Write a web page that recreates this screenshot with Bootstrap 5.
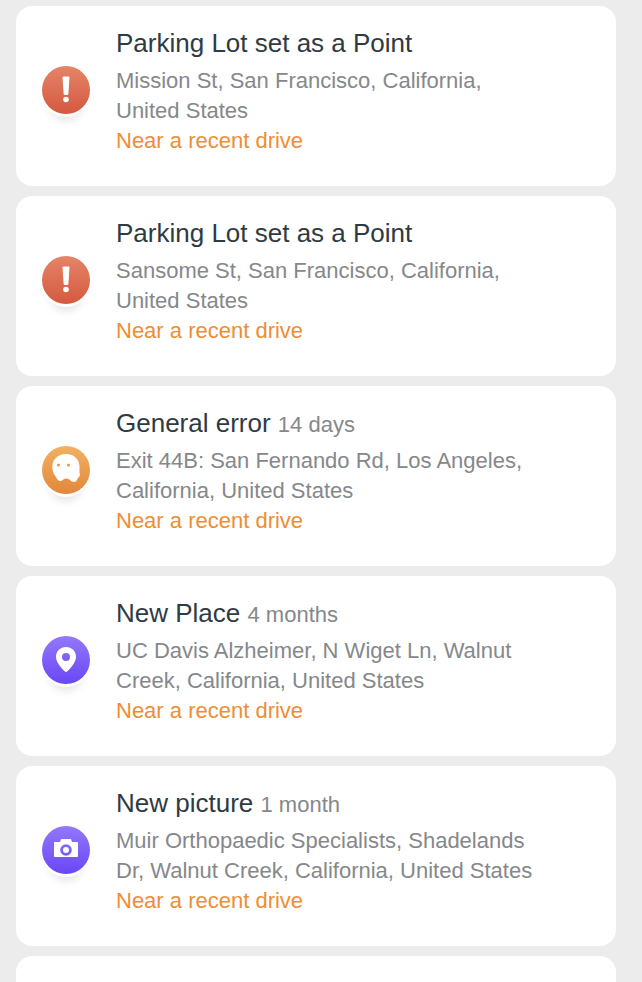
<!DOCTYPE html>
<html lang="en">
<head>
    <meta charset="UTF-8">
    <meta name="viewport" content="width=device-width, initial-scale=1.0">
    <title>Activity</title>
    <link href="https://cdn.jsdelivr.net/npm/bootstrap@5.3.0/dist/css/bootstrap.min.css" rel="stylesheet">
    <style>
        html, body {
            overflow: hidden;
            background-color: #ececec;
        }
        body {
            font-family: "Liberation Sans", Arial, sans-serif;
        }
        .feed {
            gap: 10px;
            padding: 6px 26px 0 16px;
        }
        .feed-item {
            height: 180px;
            border-radius: 16px;
            background-color: #fff;
            padding: 20px 80px 0 26px;
        }
        .feed-icon {
            flex: 0 0 48px;
            width: 48px;
            height: 48px;
            margin-top: 40px;
            margin-right: 26px;
            border-radius: 50%;
            box-shadow: 0 3px 0 #fff, 0 14px 8px -7px rgba(0, 0, 0, .1);
        }
        .feed-icon svg {
            display: block;
            width: 48px;
            height: 48px;
        }
        .icon-red { background: linear-gradient(#e58468, #d4593f); }
        .icon-orange { background: linear-gradient(#f2b162, #e2873a); }
        .icon-purple { background: linear-gradient(#9478fb, #6a47f5); }
        .feed-title {
            margin: 0 0 6px;
            font-size: 26px;
            font-weight: 400;
            line-height: 34px;
            color: #2f3a43;
        }
        .feed-age {
            font-size: 22px;
            line-height: 1;
            color: #85888b;
        }
        .feed-address {
            margin: 0;
            font-size: 22px;
            line-height: 30px;
            color: #85888b;
        }
        .feed-note {
            font-size: 22px;
            line-height: 30px;
            color: #ed8e34;
        }
    </style>
</head>
<body>
    <div class="feed d-flex flex-column">
        <div class="feed-item d-flex align-items-start">
            <div class="feed-icon icon-red">
                <svg viewBox="0 0 48 48"><path d="M21 11h6l-1.200 17.500h-3.600z" fill="#fff" stroke="#fff" stroke-linejoin="round"/><circle cx="24" cy="33.500" r="2.800" fill="#fff"/></svg>
            </div>
            <div>
                <h5 class="feed-title">Parking Lot set as a Point</h5>
                <p class="feed-address">Mission St, San Francisco, California, United States</p>
                <div class="feed-note">Near a recent drive</div>
            </div>
        </div>
        <div class="feed-item d-flex align-items-start">
            <div class="feed-icon icon-red">
                <svg viewBox="0 0 48 48"><path d="M21 11h6l-1.200 17.500h-3.600z" fill="#fff" stroke="#fff" stroke-linejoin="round"/><circle cx="24" cy="33.500" r="2.800" fill="#fff"/></svg>
            </div>
            <div>
                <h5 class="feed-title">Parking Lot set as a Point</h5>
                <p class="feed-address">Sansome St, San Francisco, California, United States</p>
                <div class="feed-note">Near a recent drive</div>
            </div>
        </div>
        <div class="feed-item d-flex align-items-start">
            <div class="feed-icon icon-orange">
                <svg viewBox="0 0 48 48"><path d="M24.300 8C16 8 10.300 13.500 10.300 20.500 10.300 25 11.500 28 14 31c1 2 2 4 4.500 4 2 0 2.500-2.500 6-2.500 3 0 4.500 3.500 8 3.500 2 0 2.500-2.500 3.500-4 1-1 2-2 1.800-3.500-.5-2.500-.3-5.500-.3-8C37.500 13.500 32 8 24.300 8z" fill="#fff"/><circle cx="16.500" cy="19" r="1.500" fill="#e9994a"/><circle cx="26.500" cy="19" r="1.500" fill="#e9994a"/></svg>
            </div>
            <div>
                <h5 class="feed-title">General error <span class="feed-age">14 days</span></h5>
                <p class="feed-address">Exit 44B: San Fernando Rd, Los Angeles, California, United States</p>
                <div class="feed-note">Near a recent drive</div>
            </div>
        </div>
        <div class="feed-item d-flex align-items-start">
            <div class="feed-icon icon-purple">
                <svg viewBox="0 0 48 48"><path fill-rule="evenodd" d="M24 11c-5.800 0-10 4.300-10 9.800 0 5.700 5.500 11.300 8.600 14.500.8.800 2 .8 2.800 0 3.100-3.200 8.600-8.800 8.600-14.500C34 15.300 29.800 11 24 11zm0 6a4 4 0 1 1 0 8 4 4 0 0 1 0-8z" fill="#fff"/></svg>
            </div>
            <div>
                <h5 class="feed-title">New Place <span class="feed-age">4 months</span></h5>
                <p class="feed-address">UC Davis Alzheimer, N Wiget Ln, Walnut Creek, California, United States</p>
                <div class="feed-note">Near a recent drive</div>
            </div>
        </div>
        <div class="feed-item d-flex align-items-start">
            <div class="feed-icon icon-purple">
                <svg viewBox="0 0 48 48"><path fill-rule="evenodd" d="M13 16h5l1-3h10l1 3h5c.6 0 1 .4 1 1v13c0 .6-.4 1-1 1H13c-.6 0-1-.4-1-1V17c0-.6.4-1 1-1zm11 2.200a5.800 5.800 0 1 0 0 11.600 5.800 5.800 0 0 0 0-11.600zm0 2.800a3 3 0 1 1 0 6 3 3 0 0 1 0-6z" fill="#fff"/></svg>
            </div>
            <div>
                <h5 class="feed-title">New picture <span class="feed-age">1 month</span></h5>
                <p class="feed-address">Muir Orthopaedic Specialists, Shadelands Dr, Walnut Creek, California, United States</p>
                <div class="feed-note">Near a recent drive</div>
            </div>
        </div>
        <div class="feed-item"></div>
    </div>
    <script src="https://cdn.jsdelivr.net/npm/bootstrap@5.3.0/dist/js/bootstrap.bundle.min.js"></script>
</body>
</html>
